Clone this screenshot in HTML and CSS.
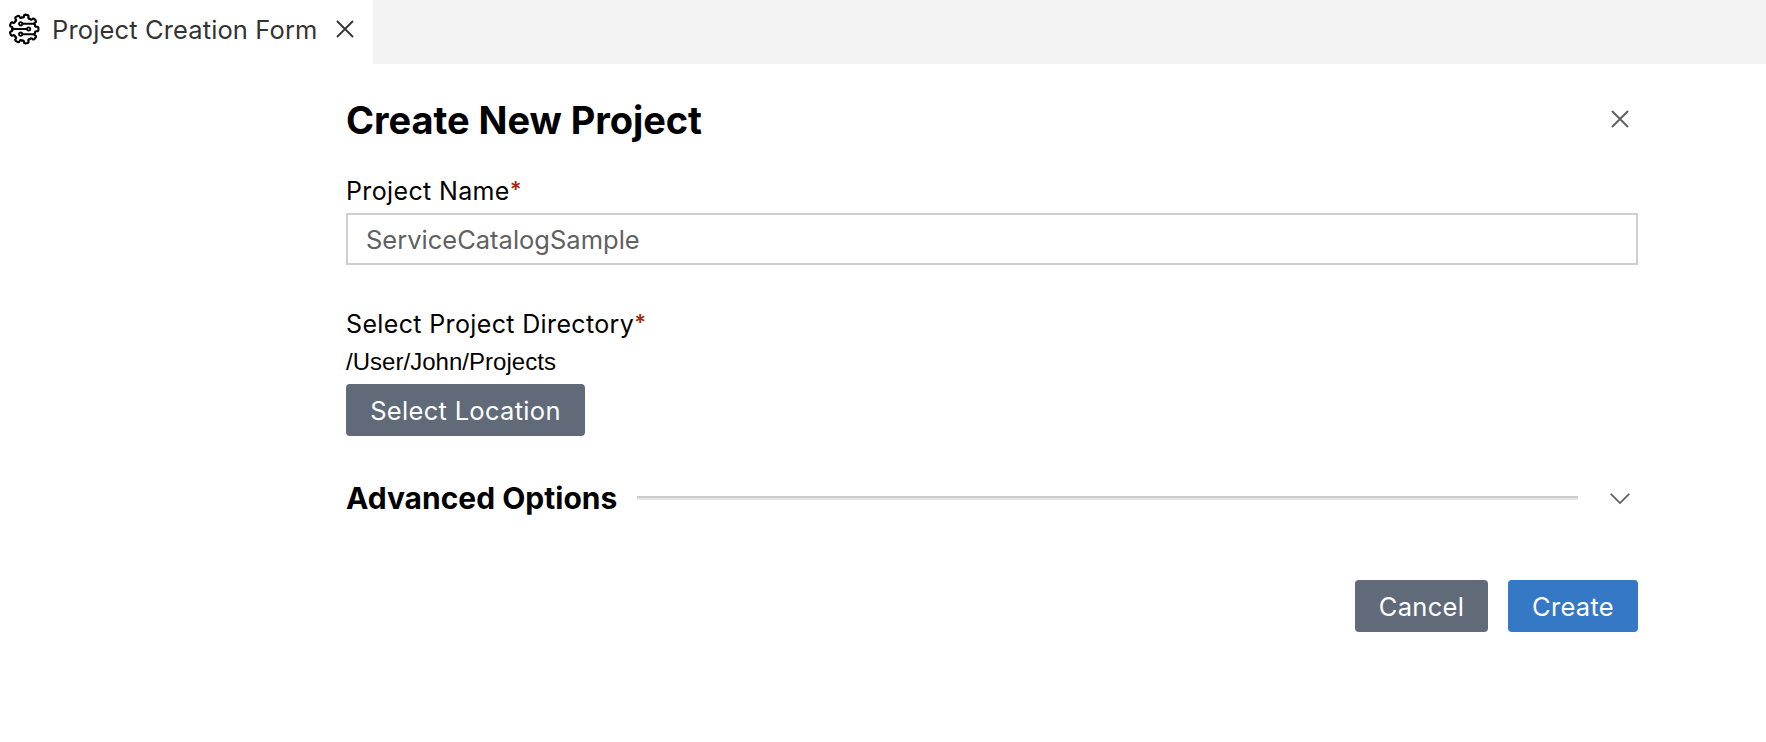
FILE: index.html
```html
<!DOCTYPE html>
<html lang="en">
<head>
<meta charset="utf-8">
<title>Project Creation Form</title>
<link rel="stylesheet" href="styles.css">
</head>
<body>
<header class="tabbar">
  <div class="tab">
    <svg class="tab-icon" viewBox="-16 -16 32 32" fill="none" stroke="#000" stroke-width="2.1" stroke-linecap="round" stroke-linejoin="round">
      <defs><path id="tooth" d="M11 -4C10.9 -2.6 11.6 -2.1 12.4 -2.2L13.6 -2.3L14.4 -1.3V1.3L13.6 2.3L12.4 2.2C11.6 2.1 10.9 2.6 11 4"/></defs>
      <use href="#tooth"/>
      <use href="#tooth" transform="rotate(40)"/>
      <use href="#tooth" transform="rotate(80)"/>
      <use href="#tooth" transform="rotate(120)"/>
      <use href="#tooth" transform="rotate(160)"/>
      <use href="#tooth" transform="rotate(200)"/>
      <use href="#tooth" transform="rotate(240)"/>
      <use href="#tooth" transform="rotate(280)"/>
      <use href="#tooth" transform="rotate(320)"/>
      <path stroke-width="1.9" d="M-1.5 -5.2H10M-12 0H2.8M-1.5 5.2H10"/>
      <g stroke-width="1.8"><circle cx="-3.3" cy="-5.2" r="1.7"/><circle cx="4.6" cy="0" r="1.7"/><circle cx="-3.3" cy="5.2" r="1.7"/></g>
    </svg>
    <span class="tab-title">Project Creation Form</span>
    <svg class="tab-close" viewBox="0 0 18 18" stroke="#333" stroke-width="1.8"><path d="M1 1L17 17M17 1L1 17"/></svg>
  </div>
</header>
<main class="form">
  <div class="form-head">
    <h1 class="title">Create New Project</h1>
    <svg class="icon close" viewBox="0 0 20 20" fill="none" stroke="#616161" stroke-width="2"><path d="M2 2L18 18M18 2L2 18"/></svg>
  </div>
  <label class="label name-label" for="name"><span>Project Name</span><span class="required">*</span></label>
  <input class="input" id="name" type="text" placeholder="ServiceCatalogSample">
  <div class="label dir-label"><span>Select Project Directory</span><span class="required">*</span></div>
  <div class="path">/User/John/Projects</div>
  <button class="button location">Select Location</button>
  <div class="advanced">
    <h2 class="subtitle">Advanced Options</h2>
    <div class="rule"></div>
    <svg class="icon" viewBox="0 0 20 20" fill="none" stroke="#616161" stroke-width="1.8"><path d="M.8 5.9L10 15.1L19.2 5.9"/></svg>
  </div>
  <div class="actions">
    <button class="button cancel">Cancel</button>
    <button class="button create">Create</button>
  </div>
</main>
</body>
</html>
```
FILE: styles.css
```css
* { box-sizing: border-box; }
body { margin: 0; background: #fff; color: #000; font-family: Inter, sans-serif; }
.tabbar { height: 64px; background: #f3f3f3; display: flex; }
.tab { width: 373px; background: #fff; display: flex; align-items: center; padding: 0 0 6px 8px; }
.tab-icon { width: 32px; height: 32px; flex: none; }
.tab-title { width: 284px; padding: 2px 0 0 12px; font-size: 25.5px; line-height: 32px; letter-spacing: .13px; color: #333; white-space: nowrap; }
.tab-close { width: 18px; height: 18px; margin-left: 12px; flex: none; }
.form { width: 1292px; margin-left: 346px; display: flex; flex-direction: column; align-items: flex-start; }
.form-head { width: 100%; height: 112px; display: flex; align-items: center; justify-content: space-between; padding-right: 8px; }
.title { margin: 0; font-size: 38px; line-height: 46px; font-weight: 700; letter-spacing: -.06px; }
.icon { width: 20px; height: 20px; flex: none; display: block; }
.close { margin-bottom: 2px; }
.label { font-size: 25px; line-height: 30px; letter-spacing: .36px; white-space: nowrap; }
.name-label { height: 37px; }
.required { color: #a1260d; font-weight: 600; letter-spacing: 0; font-size: 22px; line-height: 20px; vertical-align: 3px; }
.input { width: 100%; height: 52px; border: 2px solid #cecece; padding: 0 18px; font: 25.5px Inter, sans-serif; color: #333; outline: 0; }
.input::placeholder { color: #616161; }
.dir-label { margin-top: 44px; height: 37px; }
.path { height: 38px; font: 24px/32px "Liberation Sans", sans-serif; letter-spacing: .03px; }
.button { height: 52px; border: 0; border-radius: 4px; padding: 1px 0 0; background: #616a79; color: #fff; font: 25.5px/51px Inter, sans-serif; letter-spacing: .3px; white-space: nowrap; }
.location { width: 239px; }
.advanced { width: 100%; height: 36px; margin-top: 44px; display: flex; align-items: center; padding-right: 8px; }
.subtitle { width: 291px; margin: 0; font-size: 30px; line-height: 36px; font-weight: 700; white-space: nowrap; }
.rule { width: 941px; height: 4px; background: #e5e5e5; border-top: 2px solid #ccc; margin-right: auto; }
.actions { width: 100%; margin-top: 64px; display: flex; justify-content: flex-end; gap: 20px; }
.cancel { width: 133px; }
.create { width: 130px; background: #3478c6; }
```
